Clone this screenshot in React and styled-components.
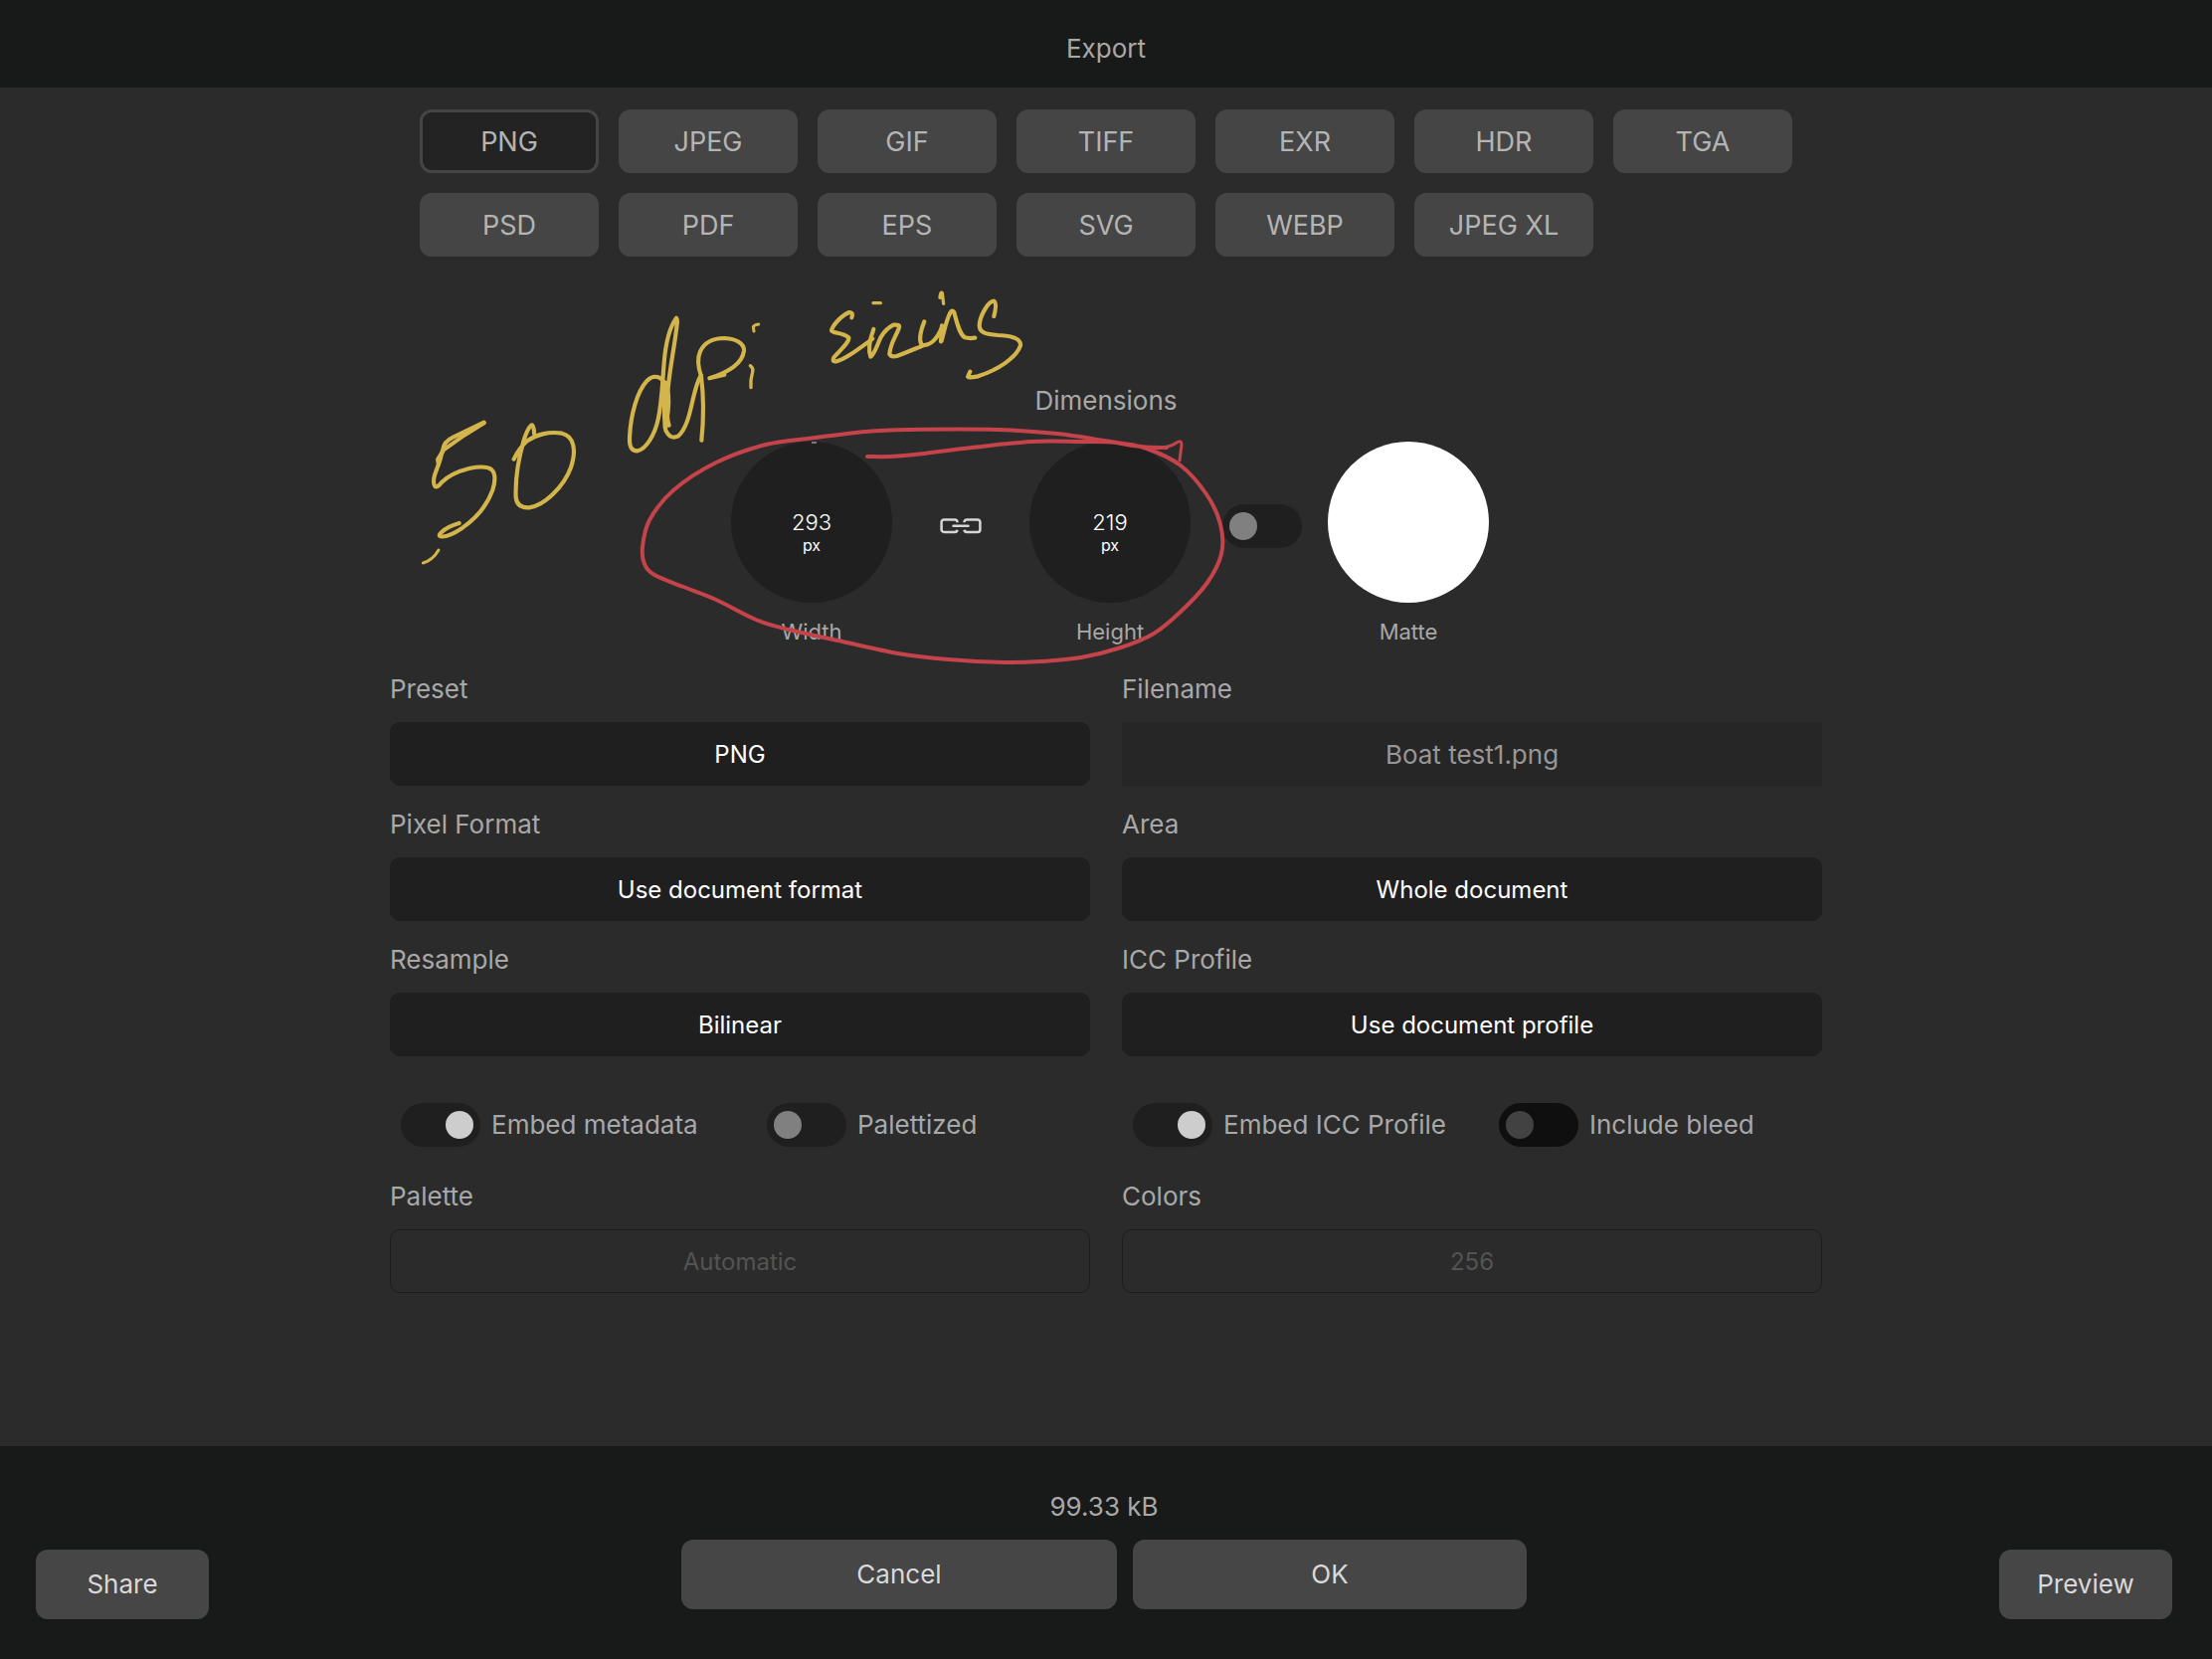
import React, { useState } from 'react';
import styled, { createGlobalStyle } from 'styled-components';

// --- Global Theme & Reset ---
const GlobalStyle = createGlobalStyle`
  * { box-sizing: border-box; }

  body {
    margin: 0;
    background: #2b2b2b;
    color: #a8a8a8;
    font-family: Inter, 'Liberation Sans', sans-serif;
    font-size: 26px;
    line-height: 32px;
  }

  button, input, select { font: inherit; color: inherit; margin: 0; }
`;

// --- Data ---
const FORMATS = [
  'PNG', 'JPEG', 'GIF', 'TIFF', 'EXR', 'HDR', 'TGA',
  'PSD', 'PDF', 'EPS', 'SVG', 'WEBP', 'JPEG XL',
];

const FIELDS = [
  { id: 'preset', label: 'Preset', value: 'PNG' },
  { id: 'filename', label: 'Filename', value: 'Boat test1.png', text: true },
  { id: 'pixel-format', label: 'Pixel Format', value: 'Use document format' },
  { id: 'area', label: 'Area', value: 'Whole document' },
  { id: 'resample', label: 'Resample', value: 'Bilinear' },
  { id: 'icc', label: 'ICC Profile', value: 'Use document profile' },
];

const PALETTE_FIELDS = [
  { id: 'palette', label: 'Palette', value: 'Automatic', disabled: true },
  { id: 'colors', label: 'Colors', value: '256', disabled: true },
];

const SWITCHES = [
  { label: 'Embed metadata', on: true },
  { label: 'Palettized' },
  { label: 'Embed ICC Profile', on: true },
  { label: 'Include bleed', disabled: true },
];

// pen strokes of the lasso, in page units
const LASSO = [
  [1173, 450], [1147, 449], [1110, 443], [1063, 436], [1003, 432], [913, 432], [870, 434],
  [820, 440], [770, 447], [720, 465], [677, 493], [653, 523], [646, 550], [648, 567],
  [658, 578], [687, 590], [720, 603], [760, 623], [793, 633], [847, 645], [903, 657],
  [953, 663], [1010, 666], [1047, 665], [1087, 661], [1127, 651], [1160, 637], [1187, 615],
  [1213, 587], [1228, 557], [1227, 527], [1213, 497], [1187, 468], [1153, 451], [1122, 445],
  [1085, 444], [1037, 444], [977, 450], [920, 457], [895, 459], [872, 459],
];

// Catmull-Rom spline through the points
const smooth = (pts) =>
  pts.slice(0, -1).reduce((d, p, i) => {
    const a = pts[i - 1] || p;
    const b = pts[i + 1];
    const c = pts[i + 2] || b;
    return `${d} C${p[0] + (b[0] - a[0]) / 6} ${p[1] + (b[1] - a[1]) / 6} ${b[0] - (c[0] - p[0]) / 6} ${b[1] - (c[1] - p[1]) / 6} ${b[0]} ${b[1]}`;
  }, `M${pts[0][0]} ${pts[0][1]}`);

// --- Layout ---
const Screen = styled.div`
  min-height: 100vh;
  display: flex;
  flex-direction: column;
`;

const Header = styled.header`
  height: 88px;
  padding-top: 10px;
  display: flex;
  align-items: center;
  justify-content: center;
  background: #181a19;

  h1 { margin: 0; font-size: 26px; font-weight: 400; }
`;

const Main = styled.main`
  flex: 1;
  padding: 22px 24px 48px;
`;

const Content = styled.div`
  position: relative;
  max-width: 1440px;
  margin: 0 auto;
`;

const Formats = styled.div`
  display: grid;
  grid-template-columns: repeat(7, 1fr);
  gap: 20px;
  padding: 0 30px;
`;

const FormatButton = styled.button`
  height: 64px;
  padding: 2px 0 0;
  border: 3px solid #454545;
  border-radius: 12px;
  background: ${props => (props.$active ? '#232323' : '#454545')};
  color: #b4b4b4;
  font-size: 27px;
  cursor: pointer;
`;

// --- Dimensions ---
const Dimensions = styled.section`
  margin-top: 129px;
  text-align: center;

  h2 { margin: 0 0 25px; font-size: 26px; font-weight: 400; }
`;

const DialRow = styled.div`
  display: flex;
  justify-content: center;
  padding-left: 8px;
`;

const DialItem = styled.label`
  width: 162px;
  display: flex;
  flex-direction: column;
  gap: 15px;
  font-size: 22px;
  line-height: 28px;
`;

const Dial = styled.span`
  position: relative;
  height: 162px;
  padding-top: 68px;
  border-radius: 50%;
  background: #1f1f1f;
  color: #fff;
  display: flex;
  flex-direction: column;
  align-items: center;

  &::before {
    content: '';
    position: absolute;
    top: 0;
    left: 50%;
    width: 5px;
    height: 2px;
    background: #777;
  }

  input {
    width: 100px;
    height: 26px;
    padding: 0;
    border: 0;
    background: none;
    text-align: center;
    font-size: 22px;
    font-weight: 300;
  }

  span { font-size: 16px; line-height: 20px; }
`;

const Swatch = styled.button`
  height: 162px;
  border: 0;
  border-radius: 50%;
  background: #fff;
  cursor: pointer;
`;

const Between = styled.div`
  width: 138px;
  height: 162px;
  padding: 8px 26px 0;
  display: flex;
  align-items: center;
  justify-content: ${props => props.$align || 'center'};
`;

const IconButton = styled.button`
  display: flex;
  padding: 8px;
  border: 0;
  background: none;
  color: #d6d6d6;
  cursor: pointer;
`;

// --- Fields ---
const FieldGrid = styled.div`
  display: grid;
  grid-template-columns: 1fr 1fr;
  column-gap: 32px;
  margin-top: ${props => props.$top}px;
`;

const Field = styled.div`
  display: flex;
  flex-direction: column;

  label { padding: 23px 0 17px; }
`;

const Select = styled.select`
  appearance: none;
  width: 100%;
  height: 64px;
  padding: 2px 16px 0;
  border: 1px solid #1f1f1f;
  border-radius: 10px;
  background: #1f1f1f;
  color: #fff;
  font-size: 24px;
  text-align: center;
  text-align-last: center;

  &:disabled {
    border-color: #1c1c1c;
    background: transparent;
    color: #545454;
    opacity: 1;
  }
`;

const TextInput = styled.input`
  width: 100%;
  height: 64px;
  padding: 0 16px;
  border: 0;
  background: #262626;
  color: #979797;
  font-size: 26px;
  text-align: center;
`;

const SwitchGrid = styled.div`
  display: grid;
  grid-template-columns: repeat(4, 1fr);
  gap: 32px;
  margin-top: 47px;
`;

const SwitchLabel = styled.label`
  display: flex;
  align-items: center;
  gap: 11px;
  padding-left: 11px;
  white-space: nowrap;
`;

const Switch = styled.input.attrs({ type: 'checkbox', role: 'switch' })`
  appearance: none;
  flex: none;
  width: 80px;
  height: 44px;
  padding: 8px 7px;
  border-radius: 22px;
  background: #1f1f1f;
  display: flex;
  cursor: pointer;

  &::before {
    content: '';
    width: 28px;
    height: 28px;
    border-radius: 50%;
    background: #808080;
  }

  &:checked { justify-content: flex-end; }
  &:checked::before { background: #cdcdcd; }

  &:disabled { background: #0f0f0f; }
  &:disabled::before { background: #424242; }
`;

// --- Footer ---
const Footer = styled.footer`
  min-height: 214px;
  padding: 45px 40px 40px 36px;
  display: flex;
  align-items: flex-end;
  justify-content: space-between;
  background: #181a19;
`;

const Confirm = styled.div`
  display: flex;
  flex-direction: column;
  align-items: center;
  gap: 17px;
  padding-bottom: 10px;

  div { display: flex; gap: 16px; }
`;

const ActionButton = styled.button`
  width: ${props => props.$width}px;
  height: 70px;
  border: 0;
  border-radius: 12px;
  background: #464646;
  color: #d9d9d9;
  cursor: pointer;
`;

const Ink = styled.svg`
  position: absolute;
  top: 0;
  left: 0;
  width: 100%;
  pointer-events: none;
  fill: none;
  stroke-linecap: round;
  stroke-linejoin: round;
`;

// --- Pieces ---
const LinkIcon = () => (
  <svg width="42" height="16" viewBox="0 0 42 16" fill="none" stroke="currentColor" strokeWidth="2.5">
    <path d="M17.5 4.3V4a2.6 2.6 0 0 0-2.6-2.6H4.2A2.6 2.6 0 0 0 1.600 4v7.400A2.6 2.6 0 0 0 4.2 14h10.700a2.6 2.6 0 0 0 2.6-2.2" />
    <path d="M24.500 4.3V4a2.6 2.6 0 0 1 2.6-2.6h10.700a2.6 2.6 0 0 1 2.6 2.6v7.400a2.6 2.6 0 0 1-2.6 2.6H27.100a2.6 2.6 0 0 1-2.6-2.2" />
    <path d="M13.500 7.700H28.500" strokeLinecap="round" />
  </svg>
);

const Notes = () => (
  <Ink viewBox="392 110 1440 600" aria-hidden="true">
    <g stroke="#d3b54b" strokeWidth="12.5">
      {/* 50 dp */}
      <g transform="translate(400 270) scale(0.33333)">
        <path d="M260 464 L165 510 Q140 522 136 545 Q128 580 112 620 Q104 645 112 657 Q119 662 132 645 Q160 617 215 603 Q265 593 282 606 Q300 622 286 668 Q262 735 195 782 Q150 812 130 808 Q120 806 132 795 Q150 778 185 768" />
        <path d="M260 466 L200 503 L138 547 L120 576 L123 590" />
        <path d="M123 849 Q105 880 76 888" strokeWidth="9" />
        <path d="M411 498 Q411 474 404 472 Q392 480 380 518 C362 580 354 640 356 690 C358 712 372 722 396 721 C440 716 500 660 522 600 C540 545 530 505 495 497 C455 490 415 502 390 520 C368 540 357 560 350 575" />
        <path d="M808 350 C795 325 772 318 752 338 C722 370 702 440 699 510 C698 540 706 550 722 550 C750 545 775 500 785 455 C797 400 798 340 803 285 C808 220 818 180 840 149 C845 155 842 170 838 200 C830 260 815 330 812 400 C811 440 813 460 818 473" />
        <path d="M808 345 C818 370 818 400 815 430 C812 460 805 480 808 488 C818 510 830 512 845 506 C870 485 880 440 890 395 C897 365 905 335 915 322" />
        <path d="M806 350 C802 400 804 450 806 480" />
        <path d="M916 518 C922 460 922 380 915 325 C903 290 903 270 912 250 C925 222 950 210 985 210 C1020 212 1045 225 1044 248 C1040 280 1005 310 940 331 L985 320" />
      </g>
      {/* i sizing */}
      <g transform="translate(600 270) scale(0.33333)">
        <path d="M488 168 Q475 170 472 176 L474 189" strokeWidth="9" />
        <path d="M463 293 Q473 300 470 312 Q463 335 465 359" strokeWidth="10" />
        <path d="M769 148 Q775 132 762 132 C740 140 712 170 708 187 C712 196 740 192 760 208 C762 222 740 240 715 268 Q708 282 722 280 C745 276 780 250 832 212" />
        <path d="M835 183 C825 210 818 245 826 266 C840 255 845 230 858 205 Q872 182 895 170 Q915 168 912 178 C905 200 885 225 883 258 Q888 268 905 264 C930 255 965 240 985 232" />
        <path d="M988 160 C978 185 970 215 980 230 C1000 235 1025 220 1042 175" />
        <path d="M1038 220 L1041 172 M1040 218 C1050 180 1058 140 1070 128 Q1078 126 1080 140 C1088 170 1095 198 1110 208 Q1125 212 1141 209" />
        <path d="M834 104H856" strokeWidth="10" />
        <path d="M1035 88 Q1037 68 1042 74 L1046 106" strokeWidth="10" />
        <path d="M1198 144 Q1208 105 1198 98 C1180 98 1155 145 1154 172 C1155 195 1175 198 1210 201 C1250 203 1280 210 1278 232 C1265 270 1210 305 1150 325 Q1115 332 1120 324 L1126 311" />
      </g>
    </g>
    <g stroke="#c5434a" strokeWidth="4">
      <path d={smooth(LASSO)} />
      <path d="M1147 449 Q1172 453 1183 445 Q1188 442 1188 447 L1186 463" strokeWidth="3" />
    </g>
  </Ink>
);

const FieldControl = ({ id, label, value, text, disabled }) => (
  <Field>
    <label htmlFor={id}>{label}</label>
    {text ? (
      <TextInput id={id} defaultValue={value} spellCheck={false} />
    ) : (
      <Select id={id} disabled={disabled}>
        <option>{value}</option>
      </Select>
    )}
  </Field>
);

const DialControl = ({ label, value }) => (
  <DialItem>
    <Dial>
      <input defaultValue={value} aria-label={label} />
      <span>px</span>
    </Dial>
    {label}
  </DialItem>
);

// --- Main App ---
export default function App() {
  const [format, setFormat] = useState('PNG');

  return (
    <Screen>
      <GlobalStyle />
      <Header><h1>Export</h1></Header>

      <Main>
        <Content>
          <Formats>
            {FORMATS.map((name) => (
              <FormatButton
                key={name}
                $active={name === format}
                aria-pressed={name === format}
                onClick={() => setFormat(name)}
              >
                {name}
              </FormatButton>
            ))}
          </Formats>

          <Dimensions>
            <h2>Dimensions</h2>
            <DialRow>
              <DialControl label="Width" value="293" />
              <Between>
                <IconButton aria-label="Link width and height"><LinkIcon /></IconButton>
              </Between>
              <DialControl label="Height" value="219" />
              <Between $align="flex-end">
                <Switch aria-label="Use matte" />
              </Between>
              <DialItem>
                <Swatch />
                Matte
              </DialItem>
            </DialRow>
          </Dimensions>

          <FieldGrid $top={5}>
            {FIELDS.map((field) => <FieldControl key={field.id} {...field} />)}
          </FieldGrid>

          <SwitchGrid>
            {SWITCHES.map(({ label, on, disabled }) => (
              <SwitchLabel key={label}>
                <Switch defaultChecked={on} disabled={disabled} />
                {label}
              </SwitchLabel>
            ))}
          </SwitchGrid>

          <FieldGrid $top={11}>
            {PALETTE_FIELDS.map((field) => <FieldControl key={field.id} {...field} />)}
          </FieldGrid>

          <Notes />
        </Content>
      </Main>

      <Footer>
        <ActionButton $width={174}>Share</ActionButton>
        <Confirm>
          <span>99.33 kB</span>
          <div>
            <ActionButton $width={438}>Cancel</ActionButton>
            <ActionButton $width={396}>OK</ActionButton>
          </div>
        </Confirm>
        <ActionButton $width={174}>Preview</ActionButton>
      </Footer>
    </Screen>
  );
}
